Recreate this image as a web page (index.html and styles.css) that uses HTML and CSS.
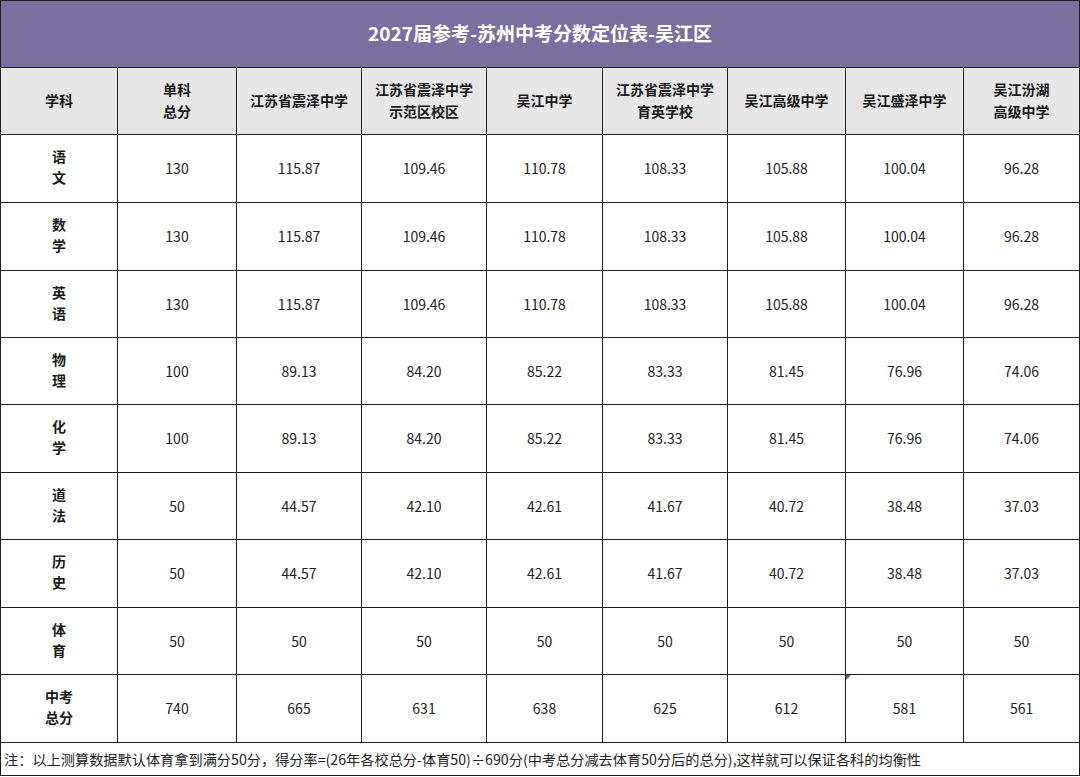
FILE: index.html
```html
<!DOCTYPE html>
<html lang="zh">
<head>
<meta charset="utf-8">
<title>2027届参考-苏州中考分数定位表-吴江区</title>
<link rel="stylesheet" href="styles.css">
</head>
<body>
<table class="score-table">
  <colgroup>
    <col class="c1"><col class="c2"><col class="c3"><col class="c4"><col class="c5"><col class="c6"><col class="c7"><col class="c8"><col class="c9">
  </colgroup>
  <tr class="title-row"><td colspan="9">2027届参考-苏州中考分数定位表-吴江区</td></tr>
  <tr class="head-row">
    <th>学科</th>
    <th>单科<br>总分</th>
    <th>江苏省震泽中学</th>
    <th>江苏省震泽中学<br>示范区校区</th>
    <th>吴江中学</th>
    <th>江苏省震泽中学<br>育英学校</th>
    <th>吴江高级中学</th>
    <th>吴江盛泽中学</th>
    <th>吴江汾湖<br>高级中学</th>
  </tr>
  <tr class="r-a"><th>语<br>文</th><td>130</td><td>115.87</td><td>109.46</td><td>110.78</td><td>108.33</td><td>105.88</td><td>100.04</td><td>96.28</td></tr>
  <tr class="r-a"><th>数<br>学</th><td>130</td><td>115.87</td><td>109.46</td><td>110.78</td><td>108.33</td><td>105.88</td><td>100.04</td><td>96.28</td></tr>
  <tr class="r-b"><th>英<br>语</th><td>130</td><td>115.87</td><td>109.46</td><td>110.78</td><td>108.33</td><td>105.88</td><td>100.04</td><td>96.28</td></tr>
  <tr class="r-b"><th>物<br>理</th><td>100</td><td>89.13</td><td>84.20</td><td>85.22</td><td>83.33</td><td>81.45</td><td>76.96</td><td>74.06</td></tr>
  <tr class="r-a"><th>化<br>学</th><td>100</td><td>89.13</td><td>84.20</td><td>85.22</td><td>83.33</td><td>81.45</td><td>76.96</td><td>74.06</td></tr>
  <tr class="r-b"><th>道<br>法</th><td>50</td><td>44.57</td><td>42.10</td><td>42.61</td><td>41.67</td><td>40.72</td><td>38.48</td><td>37.03</td></tr>
  <tr class="r-a"><th>历<br>史</th><td>50</td><td>44.57</td><td>42.10</td><td>42.61</td><td>41.67</td><td>40.72</td><td>38.48</td><td>37.03</td></tr>
  <tr class="r-b"><th>体<br>育</th><td>50</td><td>50</td><td>50</td><td>50</td><td>50</td><td>50</td><td>50</td><td>50</td></tr>
  <tr class="r-a"><th>中考<br>总分</th><td>740</td><td>665</td><td>631</td><td>638</td><td>625</td><td>612</td><td class="flagged"><span class="flag"></span>581</td><td>561</td></tr>
  <tr class="note-row"><td colspan="9">注：以上测算数据默认体育拿到满分50分，得分率=(26年各校总分-体育50)÷690分(中考总分减去体育50分后的总分),这样就可以保证各科的均衡性</td></tr>
</table>
</body>
</html>
```

FILE: styles.css
```css
html, body {
  margin: 0;
  padding: 0;
  background: #ffffff;
}

.score-table {
  border-collapse: collapse;
  table-layout: fixed;
  width: 1079px;
  font-family: "Noto Sans CJK SC", "Noto Sans", sans-serif;
  color: #1a1a1a;
}

.c1 { width: 117px; }
.c2 { width: 119px; }
.c3 { width: 125px; }
.c4 { width: 125px; }
.c5 { width: 116px; }
.c6 { width: 125px; }
.c7 { width: 118px; }
.c8 { width: 118px; }
.c9 { width: 116px; }

.score-table td,
.score-table th {
  border: 1px solid #1c1c1c;
  padding: 0;
  text-align: center;
  vertical-align: middle;
  box-sizing: border-box;
}

.title-row td {
  height: 67px;
  padding-bottom: 3px;
  background: #7b6f9f;
  color: #ffffff;
  font-size: 19px;
  font-weight: 700;
}

.head-row th {
  height: 67px;
  padding-bottom: 3px;
  background: #e7e7e7;
  font-size: 14px;
  font-weight: 700;
  line-height: 22px;
}

.r-a th, .r-a td { height: 68px; }
.r-b th, .r-b td { height: 67px; }

.score-table tr.r-a th,
.score-table tr.r-b th {
  padding-bottom: 3px;
  font-size: 14px;
  font-weight: 700;
  line-height: 21px;
  background: #ffffff;
}

.r-a td, .r-b td {
  padding-bottom: 1px;
  font-size: 14px;
  font-weight: 400;
  color: #222222;
}

.flagged {
  position: relative;
}

.flag {
  position: absolute;
  left: 0;
  top: 0;
  width: 0;
  height: 0;
  border-top: 5px solid #2e8b2e;
  border-right: 5px solid transparent;
}

.note-row td {
  height: 33px;
  text-align: left;
  padding-left: 3px;
  font-size: 14.2px;
  color: #222222;
  white-space: nowrap;
}
```
